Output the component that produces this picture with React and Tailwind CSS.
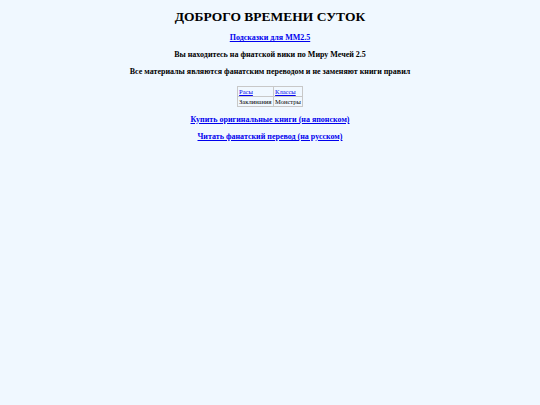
export default function App() {
  return (
    <div className="min-h-screen bg-[#f0f8ff] text-black text-center" style={{ fontFamily: '"Liberation Serif", "Times New Roman", serif' }}>
      <div className="pt-[9px] flex flex-col items-center">
        <h1 className="text-[13.5px] font-bold leading-[16px]">ДОБРОГО ВРЕМЕНИ СУТОК</h1>
        <a href="#" className="mt-[8px] text-[8px] font-bold leading-[10px] text-[#0000ee] underline">Подсказки для MM2.5</a>
        <p className="mt-[7px] text-[8px] font-bold leading-[10px]">Вы находитесь на фнатской вики по Миру Мечей 2.5</p>
        <p className="mt-[7px] text-[8px] font-bold leading-[10px]">Все материалы являются фанатским переводом и не заменяют книги правил</p>
        <table className="mt-[9px] border-collapse border border-[#c8c8c8] text-[6.5px] leading-[9px] text-left">
          <tbody>
            <tr>
              <td className="border border-[#c8c8c8] px-[1px] py-0 w-[36px]"><a href="#" className="text-[#0000ee] underline">Расы</a></td>
              <td className="border border-[#c8c8c8] px-[1px] py-0"><a href="#" className="text-[#0000ee] underline">Классы</a></td>
            </tr>
            <tr>
              <td className="border border-[#c8c8c8] px-[1px] py-0">Заклинания</td>
              <td className="border border-[#c8c8c8] px-[1px] py-0">Монстры</td>
            </tr>
          </tbody>
        </table>
        <a href="#" className="mt-[8px] text-[8px] font-bold leading-[10px] text-[#0000ee] underline">Купить оригинальные книги (на японском)</a>
        <a href="#" className="mt-[7px] text-[8px] font-bold leading-[10px] text-[#0000ee] underline">Читать фанатский перевод (на русском)</a>
      </div>
    </div>
  );
}
